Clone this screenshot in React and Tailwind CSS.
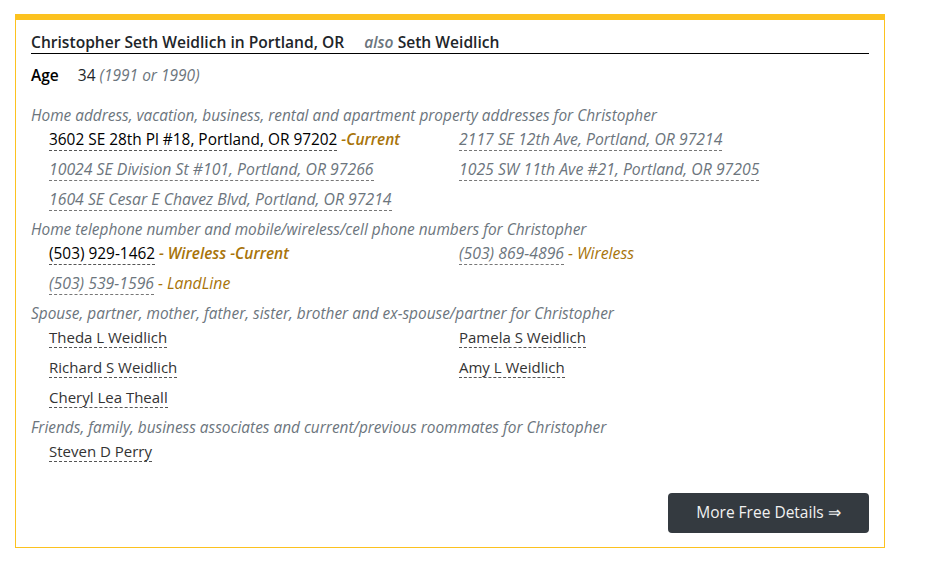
import React from 'react';

const addresses = [
  { text: '3602 SE 28th Pl #18, Portland, OR 97202', current: true },
  { text: '2117 SE 12th Ave, Portland, OR 97214' },
  { text: '10024 SE Division St #101, Portland, OR 97266' },
  { text: '1025 SW 11th Ave #21, Portland, OR 97205' },
  { text: '1604 SE Cesar E Chavez Blvd, Portland, OR 97214' },
];

const phones = [
  { text: '(503) 929-1462', type: '- Wireless -Current', current: true },
  { text: '(503) 869-4896', type: '- Wireless' },
  { text: '(503) 539-1596', type: '- LandLine' },
];

const relatives = ['Theda L Weidlich', 'Pamela S Weidlich', 'Richard S Weidlich', 'Amy L Weidlich', 'Cheryl Lea Theall'];
const associates = ['Steven D Perry'];

const SectionTitle = ({ children }) => (
  <div className="italic text-[#6c757d] text-[15.4px] leading-[24px]">{children}</div>
);

const Item = ({ children }) => (
  <div className="h-[24px] mb-[6px] pl-[18px] leading-[22px]">{children}</div>
);

const App = () => {
  return (
    <div className="bg-white w-[935px] h-[580px] pt-[14px] pl-[15px]" style={{ fontFamily: '"Open Sans", "Noto Sans", sans-serif' }}>
      <div className="w-[870px] border border-[#fcc21f] border-t-[6px] px-[15px] pt-[12px] pb-[14px] text-[15px] text-[#212529]">
        {/* Header */}
        <div className="border-b border-black pb-[1px] leading-[20px] text-[15.6px] font-semibold">
          Christopher Seth Weidlich in Portland, OR
          <span className="ml-[20px] italic text-[#6c757d]">also</span> Seth Weidlich
        </div>
        <div className="mt-[11px] leading-[20px] text-[15.5px]">
          <span className="font-semibold text-black">Age</span>
          <span className="ml-[19px]">34</span>{' '}
          <span className="italic text-[#6c757d]">(1991 or 1990)</span>
        </div>

        <div className="mt-[19px]">
          <SectionTitle>Home address, vacation, business, rental and apartment property addresses for Christopher</SectionTitle>
          <div className="grid grid-cols-[410px_1fr]">
            {addresses.map((a, i) => (
              <Item key={i}>
                {a.current ? (
                  <>
                    <span className="border-b border-dashed border-[#555] text-black font-medium text-[15.4px]">{a.text}</span>{' '}
                    <span className="italic font-semibold text-[#a8740a] text-[15.4px]">-Current</span>
                  </>
                ) : (
                  <span className="border-b border-dashed border-[#777] italic text-[#6c757d] text-[15.8px]">{a.text}</span>
                )}
              </Item>
            ))}
          </div>

          <SectionTitle>Home telephone number and mobile/wireless/cell phone numbers for Christopher</SectionTitle>
          <div className="grid grid-cols-[410px_1fr]">
            {phones.map((p, i) => (
              <Item key={i}>
                {p.current ? (
                  <>
                    <span className="border-b border-dashed border-[#555] text-black font-medium text-[15.4px]">{p.text}</span>{' '}
                    <span className="italic font-semibold text-[#a8740a] text-[15.4px]">{p.type}</span>
                  </>
                ) : (
                  <>
                    <span className="border-b border-dashed border-[#777] italic text-[#6c757d] text-[15.8px]">{p.text}</span>{' '}
                    <span className="italic text-[#a8740a] text-[15.8px]">{p.type}</span>
                  </>
                )}
              </Item>
            ))}
          </div>

          <SectionTitle>Spouse, partner, mother, father, sister, brother and ex-spouse/partner for Christopher</SectionTitle>
          <div className="grid grid-cols-[410px_1fr]">
            {relatives.map((r, i) => (
              <Item key={i}>
                <span className="border-b border-dashed border-[#555] text-[#333]">{r}</span>
              </Item>
            ))}
          </div>

          <SectionTitle>Friends, family, business associates and current/previous roommates for Christopher</SectionTitle>
          <div className="grid grid-cols-[410px_1fr]">
            {associates.map((r, i) => (
              <Item key={i}>
                <span className="border-b border-dashed border-[#555] text-[#333]">{r}</span>
              </Item>
            ))}
          </div>
        </div>

        <div className="flex justify-end mt-[23px]">
          <button className="bg-[#343a40] text-[#f1f1f1] rounded-[4px] w-[201px] h-[40px] text-[15.5px]">
            More Free Details ⇒
          </button>
        </div>
      </div>
    </div>
  );
};

export default App;
